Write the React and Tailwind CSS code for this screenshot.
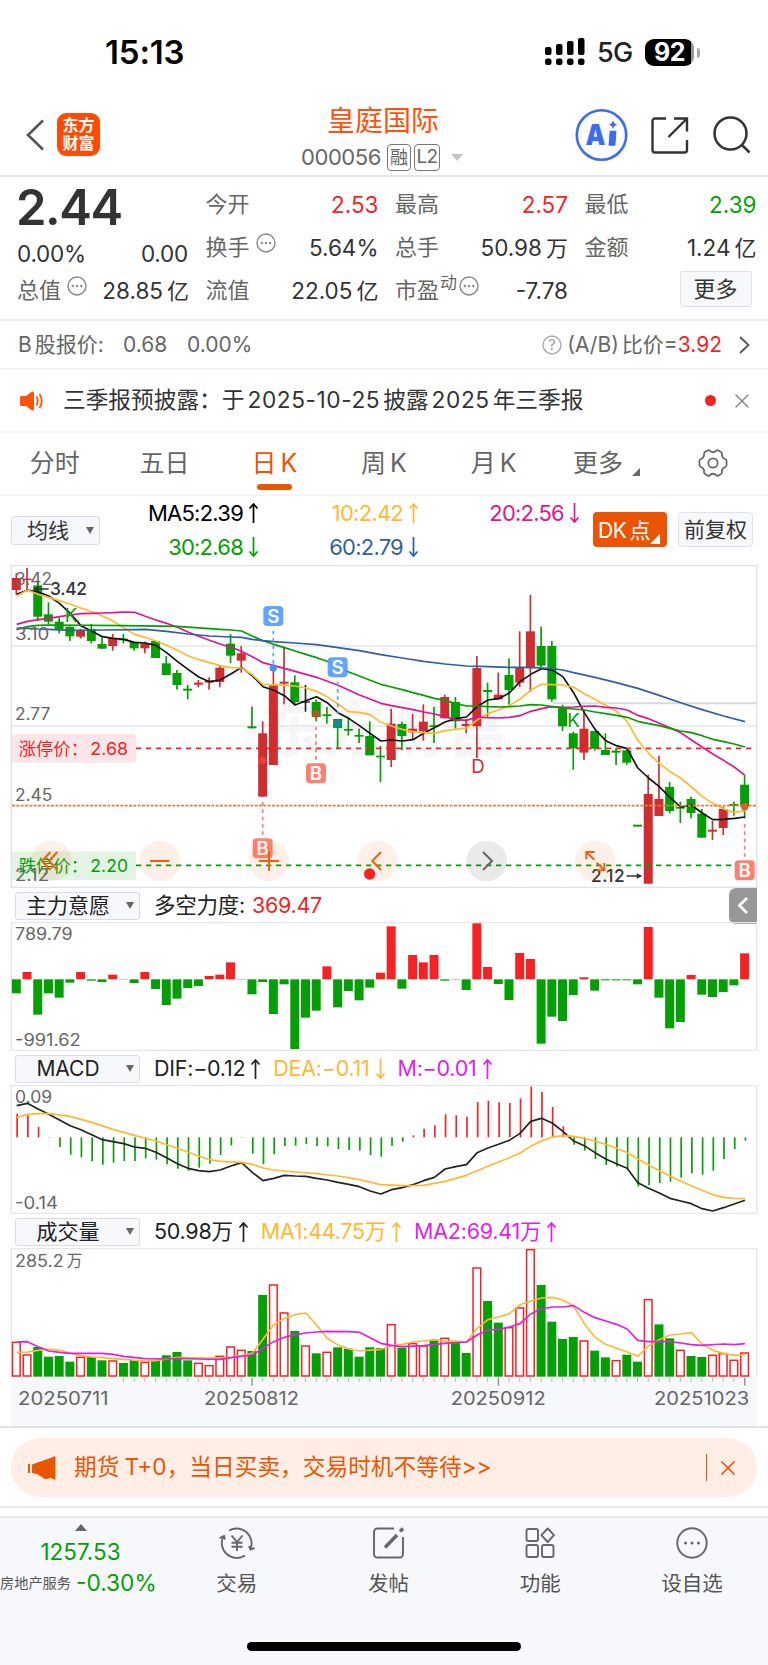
import { X } from 'lucide-react'

const RED = '#f52223'
const GREEN = '#049f04'
const CANDLE_RED = '#cf2d30'
const YELLOW = '#ffb833'
const MAGENTA = '#e31ee6'

// chart drawings use 3 units per css pixel
const STEP = 32.13
const cx = i => 49 + STEP * i

// [direction, high, body top, body bottom, low]
const CANDLES = [
  ['r', 40, 54, 90, 104], ['r', 24, 56, 60, 95], ['g', 66, 76, 170, 183], ['g', 127, 163, 185, 192],
  ['g', 172, 185, 207, 220], ['g', 200, 200, 229, 243], ['r', 207, 212, 230, 236], ['g', 192, 208, 243, 250],
  ['g', 232, 252, 266, 266], ['r', 222, 234, 258, 272], ['g', 222, 236, 241, 250], ['g', 246, 246, 265, 272],
  ['r', 245, 250, 265, 280], ['g', 243, 243, 294, 294], ['g', 288, 310, 345, 345], ['g', 330, 339, 375, 389],
  ['g', 375, 386, 392, 418], ['r', 360, 368, 374, 382], ['r', 352, 362, 368, 389], ['r', 317, 323, 366, 382],
  ['g', 222, 251, 287, 309], ['r', 258, 280, 302, 338], ['g', 440, 499, 505, 505], ['r', 484, 520, 710, 710],
  ['r', 325, 376, 615, 615], ['r', 260, 365, 371, 433], ['g', 346, 367, 426, 435], ['k', 375, 424, 428, 455],
  ['g', 418, 426, 471, 484], ['g', 441, 463, 468, 491], ['g', 477, 477, 504, 565], ['g', 471, 507, 512, 527],
  ['g', 506, 525, 530, 549], ['g', 484, 528, 586, 586], ['g', 558, 587, 592, 666], ['r', 447, 491, 600, 621],
  ['g', 485, 492, 528, 571], ['r', 462, 506, 517, 540], ['r', 433, 485, 513, 542], ['g', 440, 496, 501, 549],
  ['r', 404, 411, 475, 475], ['g', 411, 426, 484, 506], ['r', 478, 492, 498, 520], ['r', 288, 324, 499, 594],
  ['g', 368, 390, 396, 470], ['r', 338, 404, 418, 418], ['g', 295, 345, 390, 434], ['r', 214, 323, 368, 381],
  ['r', 105, 214, 325, 396], ['g', 200, 258, 317, 322], ['g', 243, 258, 418, 425], ['g', 434, 442, 499, 513],
  ['g', 515, 520, 565, 629], ['r', 450, 506, 578, 600], ['g', 513, 513, 566, 572], ['g', 520, 570, 585, 585],
  ['g', 564, 572, 578, 615], ['g', 566, 571, 608, 614], ['g', 795, 794, 800, 799], ['r', 644, 702, 971, 971],
  ['r', 587, 717, 768, 768], ['g', 666, 681, 753, 760], ['g', 725, 741, 746, 789], ['g', 710, 717, 759, 775],
  ['g', 747, 761, 833, 833], ['r', 783, 809, 815, 840], ['r', 740, 747, 804, 825], ['g', 725, 732, 738, 767],
  ['g', 646, 674, 740, 775],
]
const CANDLE_COLORS = { r: CANDLE_RED, g: GREEN, k: '#222' }

// flat "index y" pairs
const MA5 = '0 103 1 90 2 96 3 108 4 130 5 160 6 197 7 213 8 230 9 235 10 238 11 247 12 249 13 256 14 278 15 304 16 328 17 351 18 365 19 360 20 342 21 322 22 347 23 380 24 391 25 407 26 435 27 422 28 410 29 428 30 458 31 475 32 497 33 520 34 543 35 540 36 543 37 539 38 520 39 503 40 486 41 476 42 471 43 440 44 420 45 416 46 399 47 365 48 343 49 326 50 330 51 350 52 398 53 458 54 508 55 542 56 557 57 566 58 624 59 654 60 680 61 712 62 741 63 735 64 759 65 779 66 778 67 775 68 771'
const MA10 = '0 109 1 90 2 103 3 112 4 122 5 133 6 144 7 155 8 168 9 183 10 203 11 223 12 232 13 243 14 256 15 271 16 287 17 299 18 308 19 317 20 323 21 324 22 344 23 374 24 374 25 376 26 378 27 384 28 394 29 410 30 432 31 455 32 457 33 464 34 487 35 498 36 508 37 515 38 518 39 520 40 512 41 508 42 504 43 480 44 460 45 450 46 437 47 417 48 391 49 373 50 374 51 375 52 382 53 401 54 418 55 436 56 454 57 484 58 541 59 580 60 610 61 635 62 654 63 681 64 709 65 730 66 746 67 758 68 752'
const MA20 = '0 193 1 184 2 179 3 175 4 170 5 165 6 161 7 160 8 159 9 158 10 156 11 157 12 169 13 180 14 190 15 202 16 216 17 229 18 241 19 252 20 262 21 274 22 290 23 308 24 317 25 325 26 334 27 343 28 352 29 364 30 376 31 390 32 405 33 417 34 430 35 437 36 443 37 449 38 456 39 462 40 470 41 479 42 481 43 471 44 473 45 474 46 472 47 467 48 454 49 446 50 440 51 442 52 441 53 439 54 438 55 442 56 444 57 450 58 466 59 476 60 490 61 503 62 518 63 540 64 561 65 582 66 601 67 621 68 646'
const MA30 = '0 208 1 200 2 196 3 195 10 197 15 199 19 208 20 210 21 213 22 228 23 242 24 253 25 263 26 273 27 283 28 293 29 304 30 320 31 336 32 348 33 361 34 373 35 381 36 389 37 398 38 406 39 415 40 421 41 431 42 438 43 438 44 440 45 441 46 440 47 438 48 434 49 435 50 440 51 444 52 447 53 450 54 456 55 461 56 466 57 472 58 484 59 491 60 497 61 505 62 513 63 518 64 527 65 538 66 545 67 552 68 561'
const MA60 = '0 205 1 205 2 207 3 208 5 211 8 210 11 209 12 208 14 214 16 222 18 228 20 231 21 232 22 238 23 242 24 245 26 249 28 254 30 263 32 272 34 284 36 294 38 304 40 312 42 318 44 320 46 322 48 322 50 326 51 330 52 338 54 352 56 368 58 385 60 406 62 428 64 449 66 468 68 485'

const FORCE = [
  -42, 22, -106, -42, -55, -10, 22, -4, -8, 14, 1, -11, 22, -29, -77, -58, -26, -20, 10, 14, 51, 1, -45, -8,
  -104, -15, -209, -115, -94, 39, -84, -35, -63, -25, 20, 159, -28, 73, 51, 73, -4, 1, -32, 168, 37, -14, -62,
  79, 61, -193, -112, -125, -47, 6, -34, -3, -3, -3, -15, 157, -55, -147, -128, 13, -46, -53, -38, -18, 78,
]

const MACD = [
  71, 66, 31, -1, -29, -52, -60, -72, -82, -76, -71, -71, -63, -67, -81, -94, -100, -91, -79, -53, -24, -1, -49,
  -80, -51, -26, -25, -20, -26, -27, -35, -38, -40, -53, -58, -26, -13, 6, 26, 36, 69, 66, 62, 106, 110, 105, 103,
  117, 152, 136, 91, 33, -22, -40, -65, -83, -88, -97, -147, -144, -137, -133, -121, -108, -112, -100, -65, -35, -10,
]
const DIF = '0 662 1 655 2 672 3 688 4 705 5 722 6 734 7 749 8 764 9 770 10 776 11 786 12 790 13 802 14 818 15 836 16 850 17 857 18 860 19 855 20 843 21 833 22 862 23 887 24 880 25 871 26 873 27 874 28 880 29 885 30 892 31 898 32 905 33 918 34 927 35 914 36 908 37 899 38 887 39 877 40 852 41 845 42 839 43 803 44 789 45 778 46 766 47 745 48 709 49 700 50 714 51 739 52 768 53 782 54 803 55 822 56 836 57 850 58 893 59 910 60 924 61 940 62 948 63 956 64 971 65 978 66 968 67 957 68 946'
const DEA = '0 697 1 689 2 686 3 686 5 694 7 712 9 733 11 751 13 768 15 790 17 813 18 824 19 829 21 832 22 838 23 849 24 855 26 861 28 866 30 873 32 884 34 899 36 902 38 901 40 889 42 871 44 844 46 818 47 804 48 784 49 768 50 756 51 752 52 754 53 760 54 768 55 778 56 790 57 803 58 822 60 857 62 889 64 916 65 929 66 937 67 940 68 941'

const VOLUME = 'r382 r420 g396 g425 g423 g440 r427 g426 g436 r438 g444 g435 r442 g438 g421 g411 g436 r445 r452 r424 r396 r406 g408 g240 r210 r294 g348 r393 g415 r412 g397 g401 g425 g397 g399 r329 g398 r386 r393 g376 r370 g381 g414 r159 g258 g323 r338 r279 r104 g210 g320 g372 g366 r378 g407 g427 r437 g419 g440 r254 g328 g370 r406 g423 g426 r421 r416 r436 r414'
const VOL1 = '0 412 1 411 2 406 3 402 4 406 5 414 6 422 7 426 8 428 10 433 12 438 13 437 15 427 18 429 20 427 22 415 23 373 24 330 25 310 26 299 27 294 28 330 29 370 30 390 31 402 32 408 34 403 35 392 36 388 37 381 38 378 39 374 40 380 41 378 42 382 43 340 44 314 45 306 46 296 47 269 48 258 49 249 50 247 51 255 52 273 53 326 54 367 55 388 56 400 57 411 58 424 59 393 60 374 61 360 62 357 63 353 64 387 65 406 66 415 67 421 68 419'
const VOL2 = '0 381 1 380 2 395 3 408 4 412 5 415 8 415 9 418 10 424 12 431 14 432 15 430 17 432 19 433 20 428 22 420 23 400 24 380 25 367 26 359 27 354 28 351 29 349 31 350 32 352 33 368 34 385 35 391 36 395 38 392 40 385 42 381 43 360 44 345 45 343 46 336 47 326 48 297 49 282 50 276 51 276 52 272 53 292 54 308 55 318 56 328 57 342 58 376 59 380 60 380 61 380 62 384 63 389 64 391 66 387 67 389 68 386'

function Line({ data, color, width = 5 }) {
  const n = data.split(' ').map(Number)
  let points = ''
  for (let i = 0; i < n.length; i += 2) points += `${cx(n[i]) + 1},${n[i + 1]} `
  return <polyline points={points} fill="none" stroke={color} strokeWidth={width} strokeLinejoin="round" />
}

function AxisText({ x = 45, y, children, w, fill = '#666', size = 50 }) {
  return <text x={x} y={y} fontSize={size} fill={fill} textLength={w} lengthAdjust="spacingAndGlyphs">{children}</text>
}

function Mark({ x, y, letter, from, to, dot, dotColor }) {
  const color = letter === 'S' ? '#5aa0fa' : '#fd7a69'
  return (
    <g>
      <line x1={x} x2={x} y1={from} y2={to} stroke={color} strokeWidth="5" strokeDasharray="11 11" />
      <circle cx={x} cy={dot} r="11" fill={dotColor} />
      <rect x={x - 30} y={y - 30} width="60" height="60" rx="12" fill={color} fillOpacity="0.95" />
      <text x={x} y={y + 20} fontSize="56" fontWeight="600" fill="#fff" textAnchor="middle">{letter}</text>
    </g>
  )
}

function PriceChart() {
  return (
    <svg className="block h-[323px] w-[768px]" viewBox="0 15 2304 969">
      <text x="780" y="575" fontSize="187" fontWeight="700" fill="#f6f6f7">东方财富</text>
      <g fill="none" stroke="#e3e8ef" strokeWidth="4">
        <path d="M34 258H2270M34 498H2270" />
        <path d="M34 17H2270V982H34Z" stroke="#dfe1e8" />
      </g>
      <path d="M1658 430H2270" stroke="#d5dae1" strokeWidth="6" />
      {CANDLES.map(([d, hi, top, bottom, lo], i) => (
        <g key={i} fill={CANDLE_COLORS[d]}>
          <rect x={cx(i) - 2.5} y={hi} width="5" height={lo - hi} />
          <rect x={cx(i) - 13.5} y={top} width="27" height={bottom - top} />
        </g>
      ))}
      <Line data={MA5} color="#111" />
      <Line data={MA10} color={YELLOW} />
      <Line data={MA20} color="#e3148c" />
      <Line data={MA30} color={GREEN} />
      <Line data={MA60} color="#315fa3" />

      <rect x="36" y="522" width="372" height="86" rx="8" fill="#fde3e5" fillOpacity="0.9" />
      <rect x="36" y="874" width="372" height="86" rx="8" fill="#e0f3e1" fillOpacity="0.9" />
      <path d="M408 565H2258" stroke={RED} strokeWidth="5" strokeDasharray="16 14" />
      <path d="M408 916H2258" stroke={GREEN} strokeWidth="5" strokeDasharray="16 14" />
      <path d="M36 737H2270" stroke="#ea7b3c" strokeWidth="5" strokeDasharray="9 4" />
      <AxisText x={56} y={585} w={208} size={52} fill={RED}>涨停价：</AxisText>
      <AxisText x={271} y={585} w={113} size={53} fill={RED}>2.68</AxisText>
      <AxisText x={56} y={936} w={208} size={52} fill={GREEN}>跌停价：</AxisText>
      <AxisText x={271} y={936} w={113} size={53} fill={GREEN}>2.20</AxisText>

      <AxisText y={74} w={111}>3.42</AxisText>
      <AxisText y={240} w={103}>3.10</AxisText>
      <AxisText y={481} w={106}>2.77</AxisText>
      <AxisText y={722} w={112}>2.45</AxisText>
      <AxisText y={963} w={102}>2.12</AxisText>

      <g fill="none" stroke="#333" strokeWidth="5">
        <path d="M146 87H106M1880 948H1918" />
        <path d="M98 87l19 -9v18zM1927 948l-17 -8v16z" fill="#333" stroke="none" />
      </g>
      <text x="150" y="106" fontSize="52" fontWeight="500" fill="#333" textLength="111">3.42</text>
      <text x="1773" y="967" fontSize="52" fontWeight="500" fill="#333" textLength="101">2.12</text>
      <text x="194" y="185" fontSize="56" fill={GREEN}>K</text>
      <text x="1702" y="500" fontSize="56" fill={GREEN}>K</text>
      <text x="1414" y="639" fontSize="56" fill={CANDLE_RED}>D</text>

      <Mark x={820} y={168} letter="S" from={212} to={322} dot={324} dotColor="#4a90f0" />
      <Mark x={1013} y={322} letter="S" from={365} to={462} dot={491} dotColor="#1f7fb0" />
      <Mark x={948} y={640} letter="B" from={500} to={600} dot={462} dotColor="#b8552c" />
      <Mark x={788} y={865} letter="B" from={726} to={826} dot={601} dotColor="#ef3d2f" />
      <Mark x={2234} y={931} letter="B" from={792} to={890} dot={740} dotColor="#e5573a" />

      {/* chart controls */}
      <g fill="#f26a21" fillOpacity="0.1">
        {[154, 480, 806, 1133, 1786].map(x => <circle key={x} cx={x} cy="903" r="61" />)}
        <circle cx="1460" cy="903" r="61" fill="#333" />
      </g>
      <g fill="none" stroke="#ef6112" strokeWidth="6">
        <path d="M151 876L126 903L151 930M172 876L147 903L172 930" />
        <path d="M450 903H508M777 903H837M807 873V932" />
        <path d="M1143 876L1117 903L1143 930" />
        <path d="M1759 898V876H1784M1760 877L1783 899M1813 909V931H1789M1812 930L1790 908" />
        <path d="M1449 876L1476 903L1449 930" stroke="#666" />
      </g>
      <circle cx="1109" cy="942" r="17" fill={RED} />
    </svg>
  )
}

function ForceChart() {
  return (
    <svg className="block h-[129px] w-[768px]" viewBox="0 111 2304 387">
      <path d="M34 113H2270V496H34Z" fill="none" stroke="#e4e6ec" strokeWidth="4" />
      {FORCE.map((v, i) => (
        <rect key={i} x={cx(i) - 13.5} y={v > 0 ? 283 - v : 283} width="27" height={Math.abs(v)} fill={v > 0 ? RED : GREEN} />
      ))}
      <AxisText y={165} w={173}>789.79</AxisText>
      <AxisText y={483} w={197}>-991.62</AxisText>
    </svg>
  )
}

function MacdChart() {
  return (
    <svg className="block h-[129px] w-[768px]" viewBox="0 600 2304 387">
      <path d="M34 602H2270V985H34Z" fill="none" stroke="#e4e6ec" strokeWidth="4" />
      {MACD.map((v, i) => (
        <rect key={i} x={cx(i)} y={v > 0 ? 757 - v : 757} width="5" height={Math.abs(v)} fill={v > 0 ? RED : GREEN} />
      ))}
      <AxisText y={655} w={111}>0.09</AxisText>
      <AxisText y={972} w={129}>-0.14</AxisText>
      <Line data={DIF} color="#222" />
      <Line data={DEA} color={YELLOW} />
    </svg>
  )
}

function VolumeChart() {
  return (
    <svg className="block h-[178px] w-[768px]" viewBox="0 99 2304 534">
      <rect x="34" y="486" width="2236" height="147" fill="#f7f8fb" />
      <path d="M34 486V101H2270V486" fill="none" stroke="#e4e6ec" strokeWidth="4" />
      {VOLUME.split(' ').map((s, i) => {
        const y = Number(s.slice(1))
        return s[0] === 'g'
          ? <rect key={i} x={cx(i) - 13.5} y={y} width="27" height={485 - y} fill={GREEN} />
          : <rect key={i} x={cx(i) - 11.5} y={y} width="23" height={483 - y} fill="#fff" stroke={RED} strokeWidth="4.5" />
      })}
      <Line data={VOL1} color={YELLOW} />
      <Line data={VOL2} color={MAGENTA} />
      {VOLUME.split(' ').map((_, i) => i > 9 && (
        <rect key={i} x={cx(i) - 1.5} y="488" width={i % 23 === 22 ? 4 : 3} height={i % 23 === 22 ? 24 : 13} fill={i % 23 === 22 ? '#8c8c8c' : '#b9b9bc'} />
      ))}
      <AxisText y={155} w={146}>285.2</AxisText>
      <AxisText x={200} y={155} w={47}>万</AxisText>
      <AxisText x={54} y={570} w={272} size={56}>20250711</AxisText>
      <AxisText x={612} y={570} w={285} size={56}>20250812</AxisText>
      <AxisText x={1352} y={570} w={285} size={56}>20250912</AxisText>
      <AxisText x={1962} y={570} w={286} size={56}>20251023</AxisText>
    </svg>
  )
}

function Arrow({ down }) {
  return (
    <svg className={`ml-[5px] h-5 w-[11px] shrink-0 ${down ? 'rotate-180' : ''}`} viewBox="0 0 11 20" fill="none" stroke="currentColor" strokeWidth="1.7">
      <path d="M5.5 20V1M1.5 5.5L5.5 1L9.5 5.5" />
    </svg>
  )
}

function Dots() {
  return (
    <svg className="mb-[9px] ml-[6px] h-5 w-5 shrink-0" viewBox="0 0 20 20" fill="none" stroke="#888" strokeWidth="1.4">
      <circle cx="10" cy="10" r="9" />
      <g fill="#888" stroke="none"><circle cx="5.8" cy="10" r="1.2" /><circle cx="10" cy="10" r="1.2" /><circle cx="14.2" cy="10" r="1.2" /></g>
    </svg>
  )
}

function Stat({ label, value, unit, className = 'text-[#333]', extra }) {
  return (
    <div className="flex h-[43px] items-center justify-between whitespace-nowrap text-[22px]">
      <span className="flex items-center text-[#666]">{label}{extra}</span>
      <span className={`-mr-px text-[22.5px] ${className}`}>
        {value}{unit && <span className="ml-[4px] text-[22px]">{unit}</span>}
      </span>
    </div>
  )
}

function Indicator({ name, children, toggle }) {
  return (
    <div className="flex h-[34px] items-center pt-px pl-[15px] text-[21.5px] tracking-[-0.012em] whitespace-nowrap">
      <div className="flex h-7 w-[125px] items-center rounded-[3px] border border-[#d8dce4] bg-[#f7f8fb] text-[21px] tracking-normal text-[#222]">
        <span className="w-[104px] text-center">{name}</span>
        <span className="ml-[6px] h-0 w-0 border-x-4 border-t-[7px] border-x-transparent border-t-[#666]" />
      </div>
      <div className="ml-[14px] flex items-center text-[#222]">{children}</div>
      {toggle && (
        <div className="mr-[11px] ml-auto flex h-9 w-7 items-center justify-center rounded-l-[7px] bg-[#979797]">
          <svg width="10" height="17" viewBox="0 0 10 17" fill="none" stroke="#fff" strokeWidth="2.8"><path d="M9 1L1.5 8.5L9 16" /></svg>
        </div>
      )}
    </div>
  )
}

const TABS = ['分时', '五日', '日K', '周K', '月K']

function NavItem({ label, children }) {
  return (
    <div className="flex w-[151.7px] flex-col items-center">
      <svg className="mt-[9px] h-8 w-9" viewBox="0 0 36 32" fill="none" stroke="#666" strokeWidth="1.9">{children}</svg>
      <span className="mt-[10px] text-[20.5px] leading-[30px] text-[#555]">{label}</span>
    </div>
  )
}

export default function App() {
  return (
    <div className="h-[1665px] w-[768px] overflow-hidden bg-white font-['Inter','Noto_Sans_CJK_SC',sans-serif] text-[#333]">
      {/* status bar */}
      <div className="flex h-[103px] items-center pt-[3px] pl-[105px]">
        <span className="w-[440px] text-[33px] font-semibold tracking-[-0.005em] text-black">15:13</span>
        <svg className="mb-[2px] h-7 w-10" viewBox="0 0 40 28" fill="#000">
          {[0, 11, 22, 33].map((x, i) => (
            <g key={x}>
              <rect x={x} y={[9, 6, 3, 0][i]} width="6.5" height={[8, 11, 14, 17][i]} rx="2" />
              <rect x={x} y="20.5" width="6.5" height="6.5" rx="2.2" />
            </g>
          ))}
        </svg>
        <span className="ml-[12px] w-[48px] text-[27px] font-medium tracking-[-0.03em] text-[#222]">5G</span>
        <div className="mb-px flex h-[27px] w-[49px] items-center justify-center rounded-[9px] bg-[linear-gradient(90deg,#000_93%,#999_93%)] text-[25px] font-bold tracking-[-0.02em] text-white">92</div>
        <span className="mb-px ml-[3px] h-2.5 w-[3px] rounded-r-full bg-[#aaa]" />
      </div>

      {/* header */}
      <div className="flex h-[74px] border-b-2 border-[#e6e6e8]">
        <svg className="mt-[16px] ml-[26px] h-8 w-[18px]" viewBox="0 0 18 32" fill="none" stroke="#555" strokeWidth="2.6"><path d="M17 1.5L2 16L17 30.5" /></svg>
        <div className="mt-[10px] ml-[13px] flex h-[43px] w-[43px] flex-col items-center justify-center rounded-[9px] bg-[#ff4c05] text-[16px] leading-[17.5px] font-bold text-white">
          <span>东方</span>
          <span>财富</span>
        </div>
        <div className="ml-[196px] flex w-[174px] flex-col items-center">
          <span className="mt-px text-[28px] leading-[34px] text-[#ff5208]">皇庭国际</span>
          <div className="mt-[2px] flex h-[38px] items-center self-start pl-[5px] text-[22px] text-[#666]">
            <span className="w-[86px] tracking-[-0.02em]">000056</span>
            <span className="flex h-[27px] w-6 items-center justify-center rounded-[4px] border-[1.5px] border-[#777] text-[18px]">融</span>
            <span className="ml-[3px] flex h-[27px] w-[26px] items-center justify-center rounded-[4px] border-[1.5px] border-[#777] text-[19px] tracking-[-0.04em]">L2</span>
            <span className="ml-[11px] h-0 w-0 border-x-[6px] border-t-[7px] border-x-transparent border-t-[#c4c4c4]" />
          </div>
        </div>
        <svg className="mt-[6px] ml-[105px] h-[53px] w-[53px]" viewBox="0 0 53 53">
          <circle cx="26.5" cy="26" r="24.7" fill="none" stroke="#3d6bf6" strokeWidth="2.6" />
          <path d="M38 11.5l1.4 2.8 2.7 1.4-2.7 1.4-1.4 2.8-1.4-2.8-2.7-1.4 2.7-1.4z" fill="#3d6bf6" />
          <text x="10.5" y="35.5" fontSize="29" fontWeight="900" fill="#3d6bf6" textLength="20" lengthAdjust="spacingAndGlyphs">A</text>
          <path d="M35.3 22.5h5.4L39.7 36h-5.4z" fill="#3d6bf6" stroke="#3d6bf6" strokeWidth="1.5" strokeLinejoin="round" />
        </svg>
        <svg className="mt-[14px] ml-[23px] h-[38px] w-[38px]" viewBox="0 0 38 38" fill="none" stroke="#333" strokeWidth="2.4">
          <path d="M15 1.5H4A2.5 2.5 0 0 0 1.5 4V33A2.5 2.5 0 0 0 4 35.5H33.5A2.5 2.5 0 0 0 36 33V23M23 1.5H36V14.5M36 1.5L17.5 20" />
        </svg>
        <svg className="mt-[13px] ml-[24px] h-[39px] w-[39px]" viewBox="0 0 39 39" fill="none" stroke="#333" strokeWidth="2.5">
          <circle cx="17.5" cy="17.5" r="16" /><path d="M29 29L36.5 36.5" />
        </svg>
      </div>

      {/* quote */}
      <div className="grid h-[144px] grid-cols-[171px_172px_172px_171px] gap-x-[17.5px] border-b-2 border-[#f1f1f3] pt-[6px] pl-[17px]">
        <div>
          <div className="-ml-px h-[49px] text-[49px] leading-[49px] font-semibold tracking-[-0.03em]">2.44</div>
          <div className="flex h-[43px] items-center justify-between text-[22.5px] tracking-[-0.01em]"><span>0.00%</span><span>0.00</span></div>
          <div className="-mt-[6px]"><Stat label="总值" extra={<Dots />} value="28.85" unit="亿" /></div>
        </div>
        <div>
          <Stat label="今开" value="2.53" className="text-[#f52223]" />
          <Stat label="换手" extra={<Dots />} value="5.64%" />
          <Stat label="流值" value="22.05" unit="亿" />
        </div>
        <div>
          <Stat label="最高" value="2.57" className="text-[#f52223]" />
          <Stat label="总手" value="50.98" unit="万" />
          <Stat label="市盈" extra={<><span className="mb-[14px] ml-px text-[17px]">动</span><span className="-ml-[4px] flex"><Dots /></span></>} value="-7.78" />
        </div>
        <div>
          <Stat label="最低" value="2.39" className="text-[#049f04]" />
          <Stat label="金额" value="1.24" unit="亿" />
          <div className="mt-[2px] mr-1 ml-auto flex h-9 w-[72px] items-center justify-center rounded-[3px] border border-[#dfe2e9] bg-[#f7f8fb] text-[22px]">更多</div>
        </div>
      </div>

      {/* B share quote */}
      <div className="flex h-[49px] items-center border-b-2 border-[#f3f3f5] pr-[18px] pl-[18px] text-[21px] whitespace-nowrap text-[#666]">
        <span className="w-[105px]">B<span className="ml-[3px]">股报价:</span></span>
        <span className="w-[64px]">0.68</span>
        <span>0.00%</span>
        <svg className="ml-auto h-5 w-5" viewBox="0 0 20 20" fill="none" stroke="#aaa" strokeWidth="1.4">
          <circle cx="10" cy="10" r="9" />
          <text x="10" y="15" fontSize="14" fill="#999" stroke="none" textAnchor="middle">?</text>
        </svg>
        <span className="ml-[5px]">(A/B)<span className="ml-[3px]">比价=</span><span className="text-[#f52223]">3.92</span></span>
        <svg className="ml-[17px] h-[18px] w-[11px]" viewBox="0 0 11 18" fill="none" stroke="#555" strokeWidth="1.8"><path d="M1 1L9.5 9L1 17" /></svg>
      </div>

      {/* notice */}
      <div className="flex h-[63px] items-center border-b-2 border-[#f5f5f7] pr-[14px] pl-5 text-[22.7px] whitespace-nowrap">
        <svg className="h-5 w-6" viewBox="0 0 24 20" fill="#fb5406">
          <path d="M0 6.5Q0 5 1.5 5H6L12 .6Q14 0 14 2V18Q14 20 12 19.4L6 15H1.5Q0 15 0 13.5Z" />
          <path d="M16.5 5.5Q19 10 16.5 14.5M19.5 3Q24 10 19.5 17" fill="none" stroke="#fb5406" strokeWidth="1.8" />
        </svg>
        <span className="ml-[19px]">
          三季报预披露：于<span className="mx-[3px] tracking-[0.025em]">2025-10-25</span>披露<span className="mx-[3px] tracking-[0.025em]">2025</span>年三季报
        </span>
        <span className="ml-auto h-[11px] w-[11px] rounded-full bg-[#f52223]" />
        <X className="ml-[14px]" size={24} strokeWidth={1.5} color="#888" />
      </div>

      {/* period tabs */}
      <div className="grid h-[63px] grid-cols-7 border-b-2 border-[#f5f5f7] text-[25px] text-[#666]">
        {TABS.map(t => (
          <div key={t} className={`relative flex items-center justify-center pt-px ${t === '日K' ? 'text-[#ea5504]' : ''}`}>
            {t.endsWith('K') ? <>{t[0]}<span className="ml-1">K</span></> : t}
            {t === '日K' && <span className="absolute bottom-[4px] left-[38px] h-[6px] w-[35px] rounded-[3px] bg-[#ea5504]" />}
          </div>
        ))}
        <div className="flex items-center justify-center pt-px pl-[6px]">
          更多<span className="mt-4 ml-[9px] h-0 w-0 border-b-8 border-l-8 border-b-[#666] border-l-transparent" />
        </div>
        <svg className="mx-auto mt-[16px] h-7 w-[30px]" viewBox="0 0 30 28" fill="none" stroke="#666" strokeWidth="1.7">
          <path d="M9.5 1.5Q11 .6 12 2Q15 4.5 18 2Q19 .6 20.5 1.5L23 3Q24.3 3.7 23.8 5.3Q24 9 27 10Q28.6 10.6 28.6 12V16Q28.6 17.4 27 18Q24 19 23.8 22.7Q24.3 24.3 23 25L20.5 26.5Q19 27.4 18 26Q15 23.5 12 26Q11 27.4 9.5 26.5L7 25Q5.7 24.3 6.2 22.7Q6 19 3 18Q1.4 17.4 1.4 16V12Q1.4 10.6 3 10Q6 9 6.2 5.3Q5.7 3.7 7 3Z" />
          <circle cx="15" cy="14" r="4.7" />
        </svg>
      </div>

      {/* moving averages */}
      <div className="flex h-[69px] pl-[11px] text-[22px] leading-[34px] tracking-[-0.035em] whitespace-nowrap">
        <div className="mt-5 flex h-[29px] w-[89px] items-center rounded-[3px] border border-[#d8dce4] bg-[#f7f8fb] pl-[15px] text-[21px] tracking-normal">
          均线<span className="ml-[17px] h-0 w-0 border-x-4 border-t-[7px] border-x-transparent border-t-[#666]" />
        </div>
        <div className="w-[159px]">
          <div className="flex items-center justify-end text-black">MA5:2.39<Arrow /></div>
          <div className="flex items-center justify-end text-[#049f04]">30:2.68<Arrow down /></div>
        </div>
        <div className="w-[160px]">
          <div className="flex items-center justify-end text-[#ffb833]">10:2.42<Arrow /></div>
          <div className="flex items-center justify-end text-[#315fa3]">60:2.79<Arrow down /></div>
        </div>
        <div className="w-[161px]">
          <div className="flex items-center justify-end text-[#e3148c]">20:2.56<Arrow down /></div>
        </div>
        <div className="mt-[16px] ml-[13px] flex h-[35px] w-[74px] rounded-[4px] bg-[#ea5504] pl-[5px] text-[21px] leading-[37px] tracking-[-0.02em] text-white">
          DK<span className="ml-[3px]">点</span><span className="mt-[22px] h-0 w-0 border-b-[10px] border-l-[10px] border-b-white border-l-transparent" />
        </div>
        <div className="mt-[16px] ml-[11px] flex h-[35px] w-[75px] items-center justify-center rounded-[4px] border border-[#dfe2e9] bg-[#f7f8fb] text-[21px] tracking-normal">前复权</div>
      </div>

      <PriceChart />
      <Indicator name="主力意愿" toggle>
        <span>多空力度:</span><span className="ml-[7px] text-[#f52223]">369.47</span>
      </Indicator>
      <ForceChart />
      <Indicator name="MACD">
        DIF:−0.12<Arrow />
        <span className="ml-3 flex items-center text-[#ffb833]">DEA:−0.11<Arrow down /></span>
        <span className="ml-3 flex items-center text-[#e31ee6]">M:−0.01<Arrow /></span>
      </Indicator>
      <MacdChart />
      <Indicator name="成交量">
        50.98万<Arrow />
        <span className="ml-3 flex items-center text-[#ffb833]">MA1:44.75万<Arrow /></span>
        <span className="ml-3 flex items-center text-[#e31ee6]">MA2:69.41万<Arrow /></span>
      </Indicator>
      <VolumeChart />

      {/* promo */}
      <div className="h-[82px] border-y-2 border-t-[#dfe1e8] border-b-[#e8e8ec] pt-[10px]">
        <div className="mx-[11px] flex h-[59px] items-center rounded-full bg-[#feeee6] pr-[17px] pl-[17px] text-[22.7px] whitespace-nowrap text-[#ea5504]">
          <svg className="h-6 w-7" viewBox="0 0 28 24" fill="#ea5504">
            <path d="M0 8h2v9H0zM4 8.5L24 1.5Q27.5 -1 27.5 2V23Q27.5 24 26 23.5L22 21.5Q20 24 16 22.5L12.5 20Q11 20 10.5 18.5L4 17Z" />
          </svg>
          <span className="ml-[18px]">期货<span className="ml-[5px]">T+0</span>，当日买卖，交易时机不等待&gt;&gt;</span>
          <span className="ml-auto h-[27px] w-[1.5px] bg-[#ea5504]" />
          <X className="ml-[9px]" size={24} strokeWidth={1.7} />
        </div>
      </div>

      {/* bottom bar */}
      <div className="mt-2 flex h-[149px] flex-col border-t-2 border-[#e6e7eb] bg-[#f7f8fb]">
        <div className="flex h-[124px]">
          <div className="flex w-[161px] flex-col items-center whitespace-nowrap text-[#049f04]">
            <span className="mt-[6px] h-0 w-0 border-x-[6px] border-b-[7px] border-x-transparent border-b-[#666]" />
            <span className="mt-[6px] text-[22.5px] leading-[30px]">1257.53</span>
            <div className="flex items-center self-start leading-[32px]">
              <span className="w-[76px] text-[14.2px] text-[#555]">房地产服务</span>
              <span className="text-[22.7px]">-0.30%</span>
            </div>
          </div>
          <NavItem label="交易">
            <path d="M10 3.5A15 15 0 0 1 31.5 22M26 28.5A15 15 0 0 1 4.5 9M0.5 11L5 9L6 12.5M30 19L31.5 22.5L35.5 21" />
            <path d="M12.5 8.5L18 15L23.5 8.5M18 15V24M12.5 15.7H23.5M12.5 19.7H23.5" />
          </NavItem>
          <NavItem label="发帖">
            <path d="M23 1.5H6.5A3.5 3.5 0 0 0 3 5V27A3.5 3.5 0 0 0 6.5 30.5H28.5A3.5 3.5 0 0 0 32 27V10" />
            <path d="M14 20.5L26 8M29 4.5L32 1.5" strokeWidth="3.4" />
          </NavItem>
          <NavItem label="功能">
            <rect x="4.5" y="2" width="11.5" height="12" rx="2" />
            <rect x="4.5" y="18" width="11.5" height="12" rx="2" />
            <rect x="20" y="18" width="11.5" height="12" rx="2" />
            <path d="M25.7 1.5L32 8.2L25.7 15L19.4 8.2Z" strokeLinejoin="round" />
          </NavItem>
          <NavItem label="设自选">
            <circle cx="18" cy="16" r="14.7" />
            <g fill="#666" stroke="none"><circle cx="11.5" cy="16" r="1.5" /><circle cx="18" cy="16" r="1.5" /><circle cx="24.5" cy="16" r="1.5" /></g>
          </NavItem>
        </div>
        <div className="mx-auto h-[9px] w-[274px] rounded-full bg-black" />
      </div>
    </div>
  )
}
